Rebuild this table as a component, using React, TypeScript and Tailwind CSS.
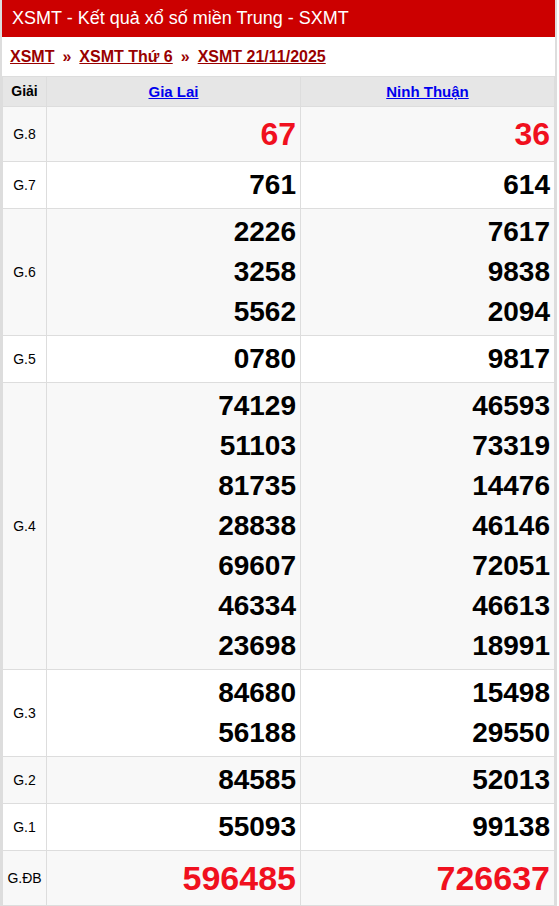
import React from "react";

type Row = { label: string; a: string[]; b: string[]; kind?: "g8" | "db" };

const rows: Row[] = [
  { label: "G.8", a: ["67"], b: ["36"], kind: "g8" },
  { label: "G.7", a: ["761"], b: ["614"] },
  { label: "G.6", a: ["2226", "3258", "5562"], b: ["7617", "9838", "2094"] },
  { label: "G.5", a: ["0780"], b: ["9817"] },
  {
    label: "G.4",
    a: ["74129", "51103", "81735", "28838", "69607", "46334", "23698"],
    b: ["46593", "73319", "14476", "46146", "72051", "46613", "18991"],
  },
  { label: "G.3", a: ["84680", "56188"], b: ["15498", "29550"] },
  { label: "G.2", a: ["84585"], b: ["52013"] },
  { label: "G.1", a: ["55093"], b: ["99138"] },
  { label: "G.ĐB", a: ["596485"], b: ["726637"], kind: "db" },
];

function Cell({ nums, kind, bg }: { nums: string[]; kind?: "g8" | "db"; bg: string }) {
  const cls =
    kind === "g8"
      ? "text-[32px] leading-[48px] text-[#f0101e]"
      : kind === "db"
      ? "text-[34px] leading-[48px] text-[#f0101e]"
      : "text-[28px] leading-[40px] text-black";
  return (
    <td className={`border border-[#dddddd] px-[4px] py-[3px] text-right align-middle ${bg}`}>
      {nums.map((n) => (
        <div key={n} className={`font-bold ${cls}`}>
          {n}
        </div>
      ))}
    </td>
  );
}

export default function App() {
  return (
    <div
      className="w-[557px] border-x-2 border-[#dddddd] bg-white"
      style={{ fontFamily: '"Liberation Sans", Arial, sans-serif' }}
    >
      <div className="h-[37px] bg-[#cc0000] pl-[10px] text-[18px] leading-[37px] text-white">
        XSMT - Kết quả xổ số miền Trung - SXMT
      </div>
      <div className="flex h-[39px] items-center gap-[8px] pl-[8px] text-[16px] font-bold text-[#990000]">
        <a className="underline" href="#">XSMT</a>
        <span>»</span>
        <a className="underline" href="#">XSMT Thứ 6</a>
        <span>»</span>
        <a className="underline" href="#">XSMT 21/11/2025</a>
      </div>
      <table className="w-full table-fixed border-collapse">
        <colgroup>
          <col className="w-[44px]" />
          <col className="w-[254px]" />
          <col />
        </colgroup>
        <thead>
          <tr className="bg-[#e6e6e6]">
            <th className="border border-[#dddddd] py-[5px] text-center text-[14px] font-bold leading-[19px] text-black">
              Giải
            </th>
            <th className="border border-[#dddddd] py-[5px] text-center text-[15px] font-bold leading-[19px]">
              <a className="text-[#0000ee] underline" href="#">Gia Lai</a>
            </th>
            <th className="border border-[#dddddd] py-[5px] text-center text-[15px] font-bold leading-[19px]">
              <a className="text-[#0000ee] underline" href="#">Ninh Thuận</a>
            </th>
          </tr>
        </thead>
        <tbody>
          {rows.map((r, i) => {
            const bg = i % 2 === 0 ? "bg-[#f8f8f8]" : "bg-white";
            return (
              <tr key={r.label}>
                <td className={`border border-[#dddddd] text-center align-middle text-[14px] text-black ${bg}`}>
                  {r.label}
                </td>
                <Cell nums={r.a} kind={r.kind} bg={bg} />
                <Cell nums={r.b} kind={r.kind} bg={bg} />
              </tr>
            );
          })}
        </tbody>
      </table>
    </div>
  );
}
